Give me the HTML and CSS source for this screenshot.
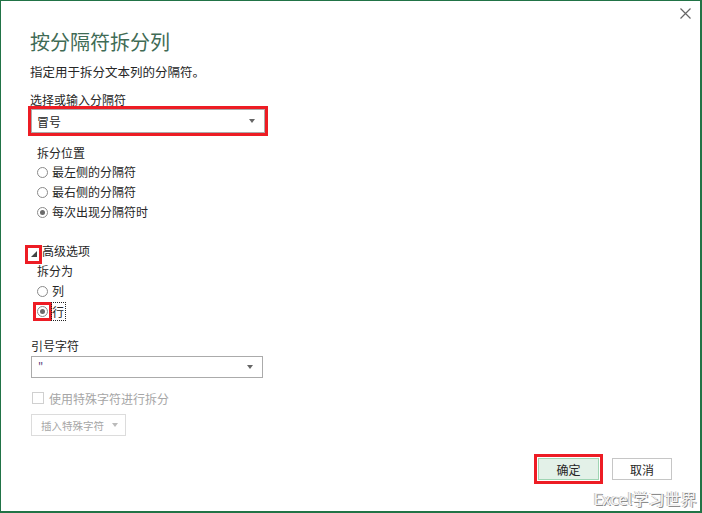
FILE: index.html
```html
<!DOCTYPE html>
<html lang="zh-CN">
<head>
    <meta charset="UTF-8">
    <meta name="viewport" content="width=device-width, initial-scale=1.0">
    <title>按分隔符拆分列</title>
    <link rel="stylesheet" href="styles.css">
</head>
<body>
    <div class="dialog">
        <button class="close" type="button" aria-label="关闭">
            <svg width="11" height="11" viewBox="0 0 11 11"><path d="M0.5 0.5 L10.5 10.5 M10.5 0.5 L0.5 10.5" stroke="#666" stroke-width="1.2" fill="none"/></svg>
        </button>

        <h1 class="title">按分隔符拆分列</h1>
        <p class="desc">指定用于拆分文本列的分隔符。</p>

        <div class="label">选择或输入分隔符</div>
        <div class="select select-main marked">冒号<span class="caret"></span></div>

        <div class="group group-pos">
            <div class="group-title">拆分位置</div>
            <div class="radio"><span class="circle"></span>最左侧的分隔符</div>
            <div class="radio"><span class="circle"></span>最右侧的分隔符</div>
            <div class="radio"><span class="circle checked"></span>每次出现分隔符时</div>
        </div>

        <div class="toggle">
            <span class="tri-box marked"><span class="tri"></span></span>高级选项
        </div>

        <div class="group group-split">
            <div class="group-title">拆分为</div>
            <div class="radio"><span class="circle"></span>列</div>
            <div class="radio"><span class="mark marked"><span class="circle checked"></span></span><span class="focus">行</span></div>
        </div>

        <div class="quote">
            <div class="label">引号字符</div>
            <div class="select select-quote"><span class="qchar">"</span><span class="caret"></span></div>
            <div class="check"><span class="box"></span>使用特殊字符进行拆分</div>
            <div class="insert-btn">插入特殊字符<span class="caret small"></span></div>
        </div>

        <div class="footer">
            <button class="btn btn-ok marked" type="button">确定</button>
            <button class="btn" type="button">取消</button>
        </div>

        <div class="watermark">Excel学习世界</div>
    </div>
</body>
</html>
```
FILE: styles.css
```css
/* ---------- split column dialog ---------- */

* {
    box-sizing: border-box;
}

body {
    margin: 0;
    background: #fff;
    font-family: "Noto Sans CJK SC", "Noto Sans", sans-serif;
    color: #262626;
    overflow: hidden;
}

.dialog {
    position: relative;
    width: 702px;
    height: 513px;
    border: 1px solid #217346;
    border-right-width: 2px;
    border-bottom-width: 2px;
    padding: 27px 28px 0 29px;
    display: flex;
    flex-direction: column;
    align-items: flex-start;
}

.close {
    position: absolute;
    top: 7px;
    right: 9px;
    padding: 0;
    border: 0;
    background: none;
    line-height: 0;
}

.title {
    margin: 0;
    font-size: 20px;
    font-weight: normal;
    line-height: 28px;
    color: #3f6b55;
}

.desc {
    margin: 6px 0 0;
    font-size: 12.5px;
    line-height: 20px;
}

.label {
    margin-top: 9px;
    font-size: 12px;
    line-height: 18px;
}

.marked {
    outline: 3px solid #ed1c24;
}

/* select boxes */

.select {
    position: relative;
    display: flex;
    align-items: center;
    border: 1px solid #ababab;
    background: #fff;
    font-size: 12px;
}

.select-main {
    width: 234px;
    height: 24px;
    margin-left: 1px;
    padding-left: 5px;
}

.caret {
    margin-left: auto;
    margin-right: 9px;
    width: 0;
    height: 0;
    border-left: 3px solid transparent;
    border-right: 3px solid transparent;
    border-top: 4px solid #666;
}

.caret.small {
    margin-left: 8px;
    margin-right: 0;
    border-top-color: #bbb;
}

/* radio groups */

.group {
    padding-left: 7px;
    font-size: 12px;
}

.group-pos {
    margin-top: 10px;
}

.group-title {
    line-height: 19px;
}

.group-split .group-title {
    line-height: 20px;
}

.radio {
    display: flex;
    align-items: center;
    height: 20px;
    line-height: 20px;
}

.circle {
    width: 11px;
    height: 11px;
    border: 1px solid #8a8a8a;
    border-radius: 50%;
    background: #fff;
    margin-right: 4px;
    display: flex;
    align-items: center;
    justify-content: center;
}

.circle.checked::after {
    content: "";
    width: 5px;
    height: 5px;
    border-radius: 50%;
    background: #6a6a6a;
}

.mark {
    display: flex;
    outline-offset: 1px;
    margin-right: 4px;
}

.mark .circle {
    margin-right: 0;
}

.focus {
    outline: 1px dotted #222;
    line-height: 17px;
    padding-right: 1px;
}

/* advanced toggle */

.toggle {
    display: flex;
    align-items: flex-start;
    margin-top: 19px;
    margin-left: -2px;
    font-size: 12px;
    line-height: 20px;
}

.tri-box {
    position: relative;
    width: 11px;
    height: 13px;
    margin-top: 7px;
    margin-right: 3px;
}

.tri {
    position: absolute;
    right: 2px;
    bottom: 4px;
    width: 0;
    height: 0;
    border-left: 6px solid transparent;
    border-bottom: 6px solid #444;
}

/* quote section */

.quote {
    margin-top: 15px;
    margin-left: 1px;
    font-size: 12px;
}

.quote .label {
    margin-top: 0;
    line-height: 20px;
}

.select-quote {
    width: 232px;
    height: 22px;
    padding-left: 6px;
}

.qchar {
    color: #5a3d7a;
    font-size: 11px;
    line-height: 1;
}

.check {
    display: flex;
    align-items: center;
    margin-top: 10px;
    height: 20px;
    color: #a6a6a6;
}

.box {
    width: 12px;
    height: 12px;
    border: 1px solid #d0d0d0;
    margin-left: 1px;
    margin-right: 5px;
}

.insert-btn {
    display: flex;
    align-items: center;
    width: 95px;
    height: 22px;
    margin-top: 6px;
    padding-left: 9px;
    border: 1px solid #dcdcdc;
    color: #a6a6a6;
    font-size: 10.5px;
}

/* footer buttons */

.footer {
    align-self: stretch;
    display: flex;
    justify-content: flex-end;
    gap: 13px;
    margin-top: 22px;
}

.btn {
    width: 60px;
    height: 22px;
    padding: 0;
    border: 1px solid #c6c6c6;
    background: #fff;
    font-family: inherit;
    font-size: 12px;
    color: #262626;
}

.btn-ok {
    width: 61px;
    border-color: #9fd5b3;
    background: #e3f1e8;
    outline-offset: 1px;
}

.watermark {
    position: absolute;
    right: 3px;
    bottom: 3px;
    font-size: 16px;
    line-height: 20px;
    color: #f4f4f4;
    text-shadow: 1px 1px 0 #8c8c8c, -1px 0 0 #c4c4c4;
    letter-spacing: 0.2px;
}
```
